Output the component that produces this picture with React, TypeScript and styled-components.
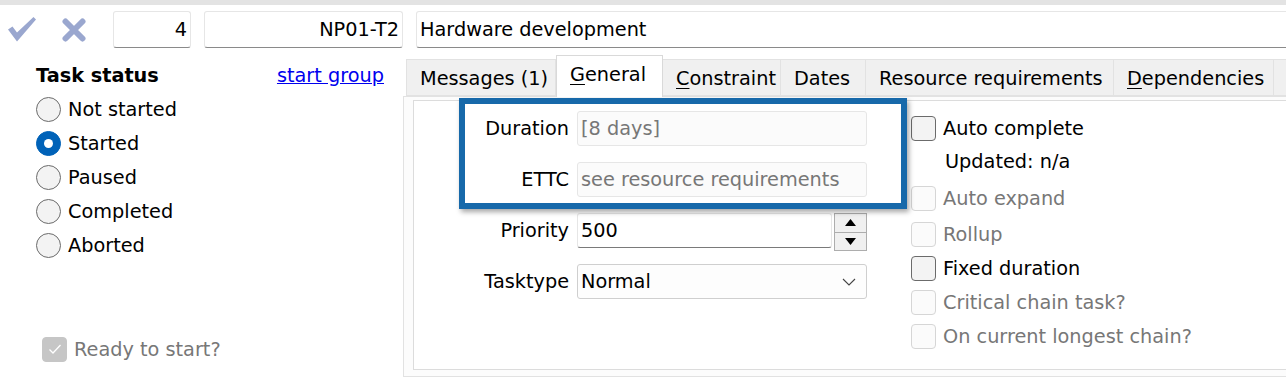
import styled, { createGlobalStyle } from "styled-components";

const GlobalStyle = createGlobalStyle`
  html, body {
    margin: 0;
    padding: 0;
    background: #fff;
  }
  body {
    font-family: "DejaVu Sans", "Liberation Sans", sans-serif;
    font-size: 19.3px;
    color: #000;
  }
`;

const ICON = "#9aa7cf";

const Page = styled.div`
  width: 1286px;
  height: 379px;
  overflow: hidden;
  display: flex;
  flex-direction: column;
`;

const TopStrip = styled.div`
  height: 5px;
  background: #e3e3e3;
`;

const Toolbar = styled.div`
  display: flex;
  align-items: center;
  height: 37px;
  margin-top: 6px;
  padding-left: 8px;
`;

const IconSlot = styled.div<{ $w: number; $ml: number }>`
  width: ${(p) => p.$w}px;
  margin-left: ${(p) => p.$ml}px;
  height: 37px;
  display: flex;
  align-items: center;
  justify-content: center;
`;

const Field = styled.div<{ $w?: number; $right?: boolean; $ml: number }>`
  box-sizing: border-box;
  height: 37px;
  margin-left: ${(p) => p.$ml}px;
  ${(p) => (p.$w ? `width: ${p.$w}px;` : "flex: 1; margin-right: -6px;")}
  border: 1px solid #e6e6e6;
  border-bottom: 1px solid #8a8a8a;
  border-radius: 3px;
  background: #fff;
  display: flex;
  align-items: center;
  justify-content: ${(p) => (p.$right ? "flex-end" : "flex-start")};
  padding: 0 3px;
  white-space: nowrap;
`;

const Main = styled.div`
  display: flex;
  margin-top: 7px;
  flex: 1;
`;

const LeftPanel = styled.div`
  width: 403px;
  box-sizing: border-box;
  padding: 3px 19px 0 36px;
  display: flex;
  flex-direction: column;
`;

const HeaderRow = styled.div`
  height: 34px;
  display: flex;
  align-items: center;
  justify-content: space-between;
`;

const Title = styled.span`
  font-weight: bold;
  font-size: 19.3px;
`;

const Link = styled.a`
  color: #0000ee;
  text-decoration: underline;
  cursor: pointer;
`;

const OptionRow = styled.div<{ $h?: number; $mt?: number; $ml?: number; $disabled?: boolean }>`
  height: ${(p) => p.$h ?? 34}px;
  margin-top: ${(p) => p.$mt ?? 0}px;
  margin-left: ${(p) => p.$ml ?? 0}px;
  display: flex;
  align-items: center;
  gap: 7px;
  white-space: nowrap;
  color: ${(p) => (p.$disabled ? "#777" : "#000")};
`;

const RadioCircle = styled.span<{ $on?: boolean }>`
  box-sizing: border-box;
  width: 25px;
  height: 25px;
  border-radius: 50%;
  flex: none;
  display: flex;
  align-items: center;
  justify-content: center;
  background: ${(p) => (p.$on ? "#0062b8" : "#f3f3f3")};
  border: 1px solid ${(p) => (p.$on ? "#0062b8" : "#6b6b6b")};
  &::after {
    content: "";
    display: ${(p) => (p.$on ? "block" : "none")};
    width: 9px;
    height: 9px;
    border-radius: 50%;
    background: #fff;
  }
`;

const Box = styled.span<{ $state: "on" | "off" | "disabled" | "checkedDisabled" }>`
  box-sizing: border-box;
  width: 25px;
  height: 25px;
  border-radius: 4px;
  flex: none;
  display: flex;
  align-items: center;
  justify-content: center;
  background: ${(p) =>
    p.$state === "checkedDisabled" ? "#c6c6c6" : p.$state === "disabled" ? "#fbfbfb" : "#f3f3f3"};
  border: 1px solid
    ${(p) =>
      p.$state === "checkedDisabled" ? "#c6c6c6" : p.$state === "disabled" ? "#d6d6d6" : "#6b6b6b"};
`;

const TabsArea = styled.div`
  flex: 1;
  display: flex;
  flex-direction: column;
`;

const TabStrip = styled.div`
  display: flex;
  align-items: flex-end;
  padding-left: 3px;
  height: 41px;
  background: #fff;
`;

const Tab = styled.div<{ $w: number; $active?: boolean }>`
  box-sizing: border-box;
  width: ${(p) => p.$w}px;
  height: ${(p) => (p.$active ? 42 : 37)}px;
  margin-bottom: ${(p) => (p.$active ? -1 : 0)}px;
  padding-left: 13px;
  padding-top: ${(p) => (p.$active ? 0 : 2)}px;
  padding-bottom: ${(p) => (p.$active ? 5 : 0)}px;
  display: flex;
  align-items: center;
  white-space: nowrap;
  background: ${(p) => (p.$active ? "#fff" : "#f0f0f0")};
  border: 1px solid ${(p) => (p.$active ? "#d9d9d9" : "#e2e2e2")};
  border-bottom: ${(p) => (p.$active ? "none" : "1px solid #e2e2e2")};
  border-left: ${(p) => (p.$active ? "1px solid #d9d9d9" : "none")};
  position: relative;
  z-index: ${(p) => (p.$active ? 2 : 1)};
  &:first-child {
    border-left: 1px solid #e2e2e2;
  }
  u {
    text-decoration-thickness: 1px;
    text-underline-offset: 3px;
  }
`;

const TabFill = styled.div`
  flex: 1;
  height: 37px;
  box-sizing: border-box;
  background: #f0f0f0;
  border-top: 1px solid #e2e2e2;
  border-bottom: 1px solid #e2e2e2;
`;

const Panel = styled.div`
  box-sizing: border-box;
  height: 281px;
  border: 1px solid #e2e2e2;
  border-right: none;
  background: #fcfcfc;
  padding: 3px 0 6px 9px;
  display: flex;
`;

const InnerPanel = styled.div`
  position: relative;
  flex: 1;
  border: 1px solid #dcdcdc;
  border-right: none;
  background: #fff;
  display: flex;
  padding-top: 10px;
`;

const FormGrid = styled.div`
  display: grid;
  grid-template-columns: 155px 290px;
  grid-auto-rows: 35px;
  column-gap: 8px;
  row-gap: 16px;
  align-items: center;
`;

const Label = styled.div`
  text-align: right;
  white-space: nowrap;
`;

const Input = styled.div<{ $disabled?: boolean; $grow?: boolean }>`
  box-sizing: border-box;
  height: 35px;
  ${(p) => (p.$grow ? "flex: 1;" : "")}
  display: flex;
  align-items: center;
  padding: 0 3px;
  white-space: nowrap;
  border-radius: 3px;
  background: ${(p) => (p.$disabled ? "#fbfbfb" : "#fff")};
  color: ${(p) => (p.$disabled ? "#777" : "#000")};
  border: 1px solid #e6e6e6;
  border-bottom: 1px solid ${(p) => (p.$disabled ? "#e6e6e6" : "#7a7a7a")};
`;

const SpinRow = styled.div`
  display: flex;
  align-items: center;
  gap: 2px;
  height: 35px;
`;

const Spinner = styled.div`
  width: 33px;
  height: 38px;
  margin-top: 3px;
  display: flex;
  flex-direction: column;
  flex: none;
`;

const SpinButton = styled.div`
  box-sizing: border-box;
  flex: 1;
  background: #f0f0f0;
  border: 1px solid #adadad;
  display: flex;
  align-items: center;
  justify-content: center;
  & + & {
    border-top: none;
  }
`;

const Select = styled.div`
  box-sizing: border-box;
  height: 35px;
  display: flex;
  align-items: center;
  justify-content: space-between;
  padding: 0 10px 0 3px;
  border: 1px solid #cfcfcf;
  border-radius: 3px;
  background: #fdfdfd;
`;

const CheckColumn = styled.div`
  margin-left: 44px;
  display: flex;
  flex-direction: column;
`;

const Highlight = styled.div`
  position: absolute;
  left: 45px;
  top: -3px;
  width: 448px;
  height: 111px;
  box-sizing: border-box;
  border: 6px solid #1769aa;
  box-shadow: 2px 3px 5px rgba(0, 0, 0, 0.35);
  pointer-events: none;
`;

const CheckIcon = () => (
  <svg width="28" height="25" viewBox="0 0 28 25">
    <path d="M0 12.5 L4.5 9.5 L9 15.5 L25.5 0 L28 2.5 L9 24.5 Z" fill={ICON} />
  </svg>
);

const CrossIcon = () => (
  <svg width="24" height="24" viewBox="0 0 24 24">
    <path d="M3.5 3.5 L20.5 20.5 M20.5 3.5 L3.5 20.5" stroke={ICON} strokeWidth="6" strokeLinecap="round" />
  </svg>
);

const SmallCheck = () => (
  <svg width="14" height="12" viewBox="0 0 14 12">
    <path d="M1.5 6.5 L5 10 L12.5 2" stroke="#fff" strokeWidth="1.3" fill="none" />
  </svg>
);

const Triangle = ({ up }: { up?: boolean }) => (
  <svg width="11" height="7" viewBox="0 0 11 7">
    <path d={up ? "M5.5 0 L11 7 L0 7 Z" : "M0 0 L11 0 L5.5 7 Z"} fill="#000" />
  </svg>
);

const Chevron = () => (
  <svg width="14" height="8" viewBox="0 0 14 8">
    <path d="M1 1 L7 7 L13 1" stroke="#444" strokeWidth="1.1" fill="none" />
  </svg>
);

const statuses = ["Not started", "Started", "Paused", "Completed", "Aborted"];

const options: { label: string; state: "off" | "disabled"; mt?: number }[] = [
  { label: "Auto expand", state: "disabled", mt: 3 },
  { label: "Rollup", state: "disabled", mt: 2 },
  { label: "Fixed duration", state: "off" },
  { label: "Critical chain task?", state: "disabled" },
  { label: "On current longest chain?", state: "disabled" },
];

export default function App() {
  return (
    <Page>
      <GlobalStyle />
      <TopStrip />
      <Toolbar>
        <IconSlot $w={28} $ml={0}>
          <CheckIcon />
        </IconSlot>
        <IconSlot $w={24} $ml={26}>
          <CrossIcon />
        </IconSlot>
        <Field $w={78} $ml={27} $right>
          4
        </Field>
        <Field $w={199} $ml={13} $right>
          NP01-T2
        </Field>
        <Field $ml={13}>Hardware development</Field>
      </Toolbar>
      <Main>
        <LeftPanel>
          <HeaderRow>
            <Title>Task status</Title>
            <Link>start group</Link>
          </HeaderRow>
          {statuses.map((s) => (
            <OptionRow key={s}>
              <RadioCircle $on={s === "Started"} />
              {s}
            </OptionRow>
          ))}
          <OptionRow $mt={70} $ml={6} $disabled>
            <Box $state="checkedDisabled">
              <SmallCheck />
            </Box>
            Ready to start?
          </OptionRow>
        </LeftPanel>
        <TabsArea>
          <TabStrip>
            <Tab $w={150}>Messages (1)</Tab>
            <Tab $w={107} $active>
              <u>G</u>eneral
            </Tab>
            <Tab $w={118}>
              <u>C</u>onstraint
            </Tab>
            <Tab $w={85}>Dates</Tab>
            <Tab $w={248}>Resource requirements</Tab>
            <Tab $w={160}>
              <u>D</u>ependencies
            </Tab>
            <TabFill />
          </TabStrip>
          <Panel>
            <InnerPanel>
              <FormGrid>
                <Label>Duration</Label>
                <Input $disabled>[8 days]</Input>
                <Label>ETTC</Label>
                <Input $disabled>see resource requirements</Input>
                <Label>Priority</Label>
                <SpinRow>
                  <Input $grow>500</Input>
                  <Spinner>
                    <SpinButton>
                      <Triangle up />
                    </SpinButton>
                    <SpinButton>
                      <Triangle />
                    </SpinButton>
                  </Spinner>
                </SpinRow>
                <Label>Tasktype</Label>
                <Select>
                  Normal
                  <Chevron />
                </Select>
              </FormGrid>
              <CheckColumn>
                <OptionRow>
                  <Box $state="off" />
                  Auto complete
                </OptionRow>
                <OptionRow $h={33} $ml={34}>
                  Updated: n/a
                </OptionRow>
                {options.map((o) => (
                  <OptionRow key={o.label} $mt={o.mt} $disabled={o.state === "disabled"}>
                    <Box $state={o.state} />
                    {o.label}
                  </OptionRow>
                ))}
              </CheckColumn>
              <Highlight />
            </InnerPanel>
          </Panel>
        </TabsArea>
      </Main>
    </Page>
  );
}
